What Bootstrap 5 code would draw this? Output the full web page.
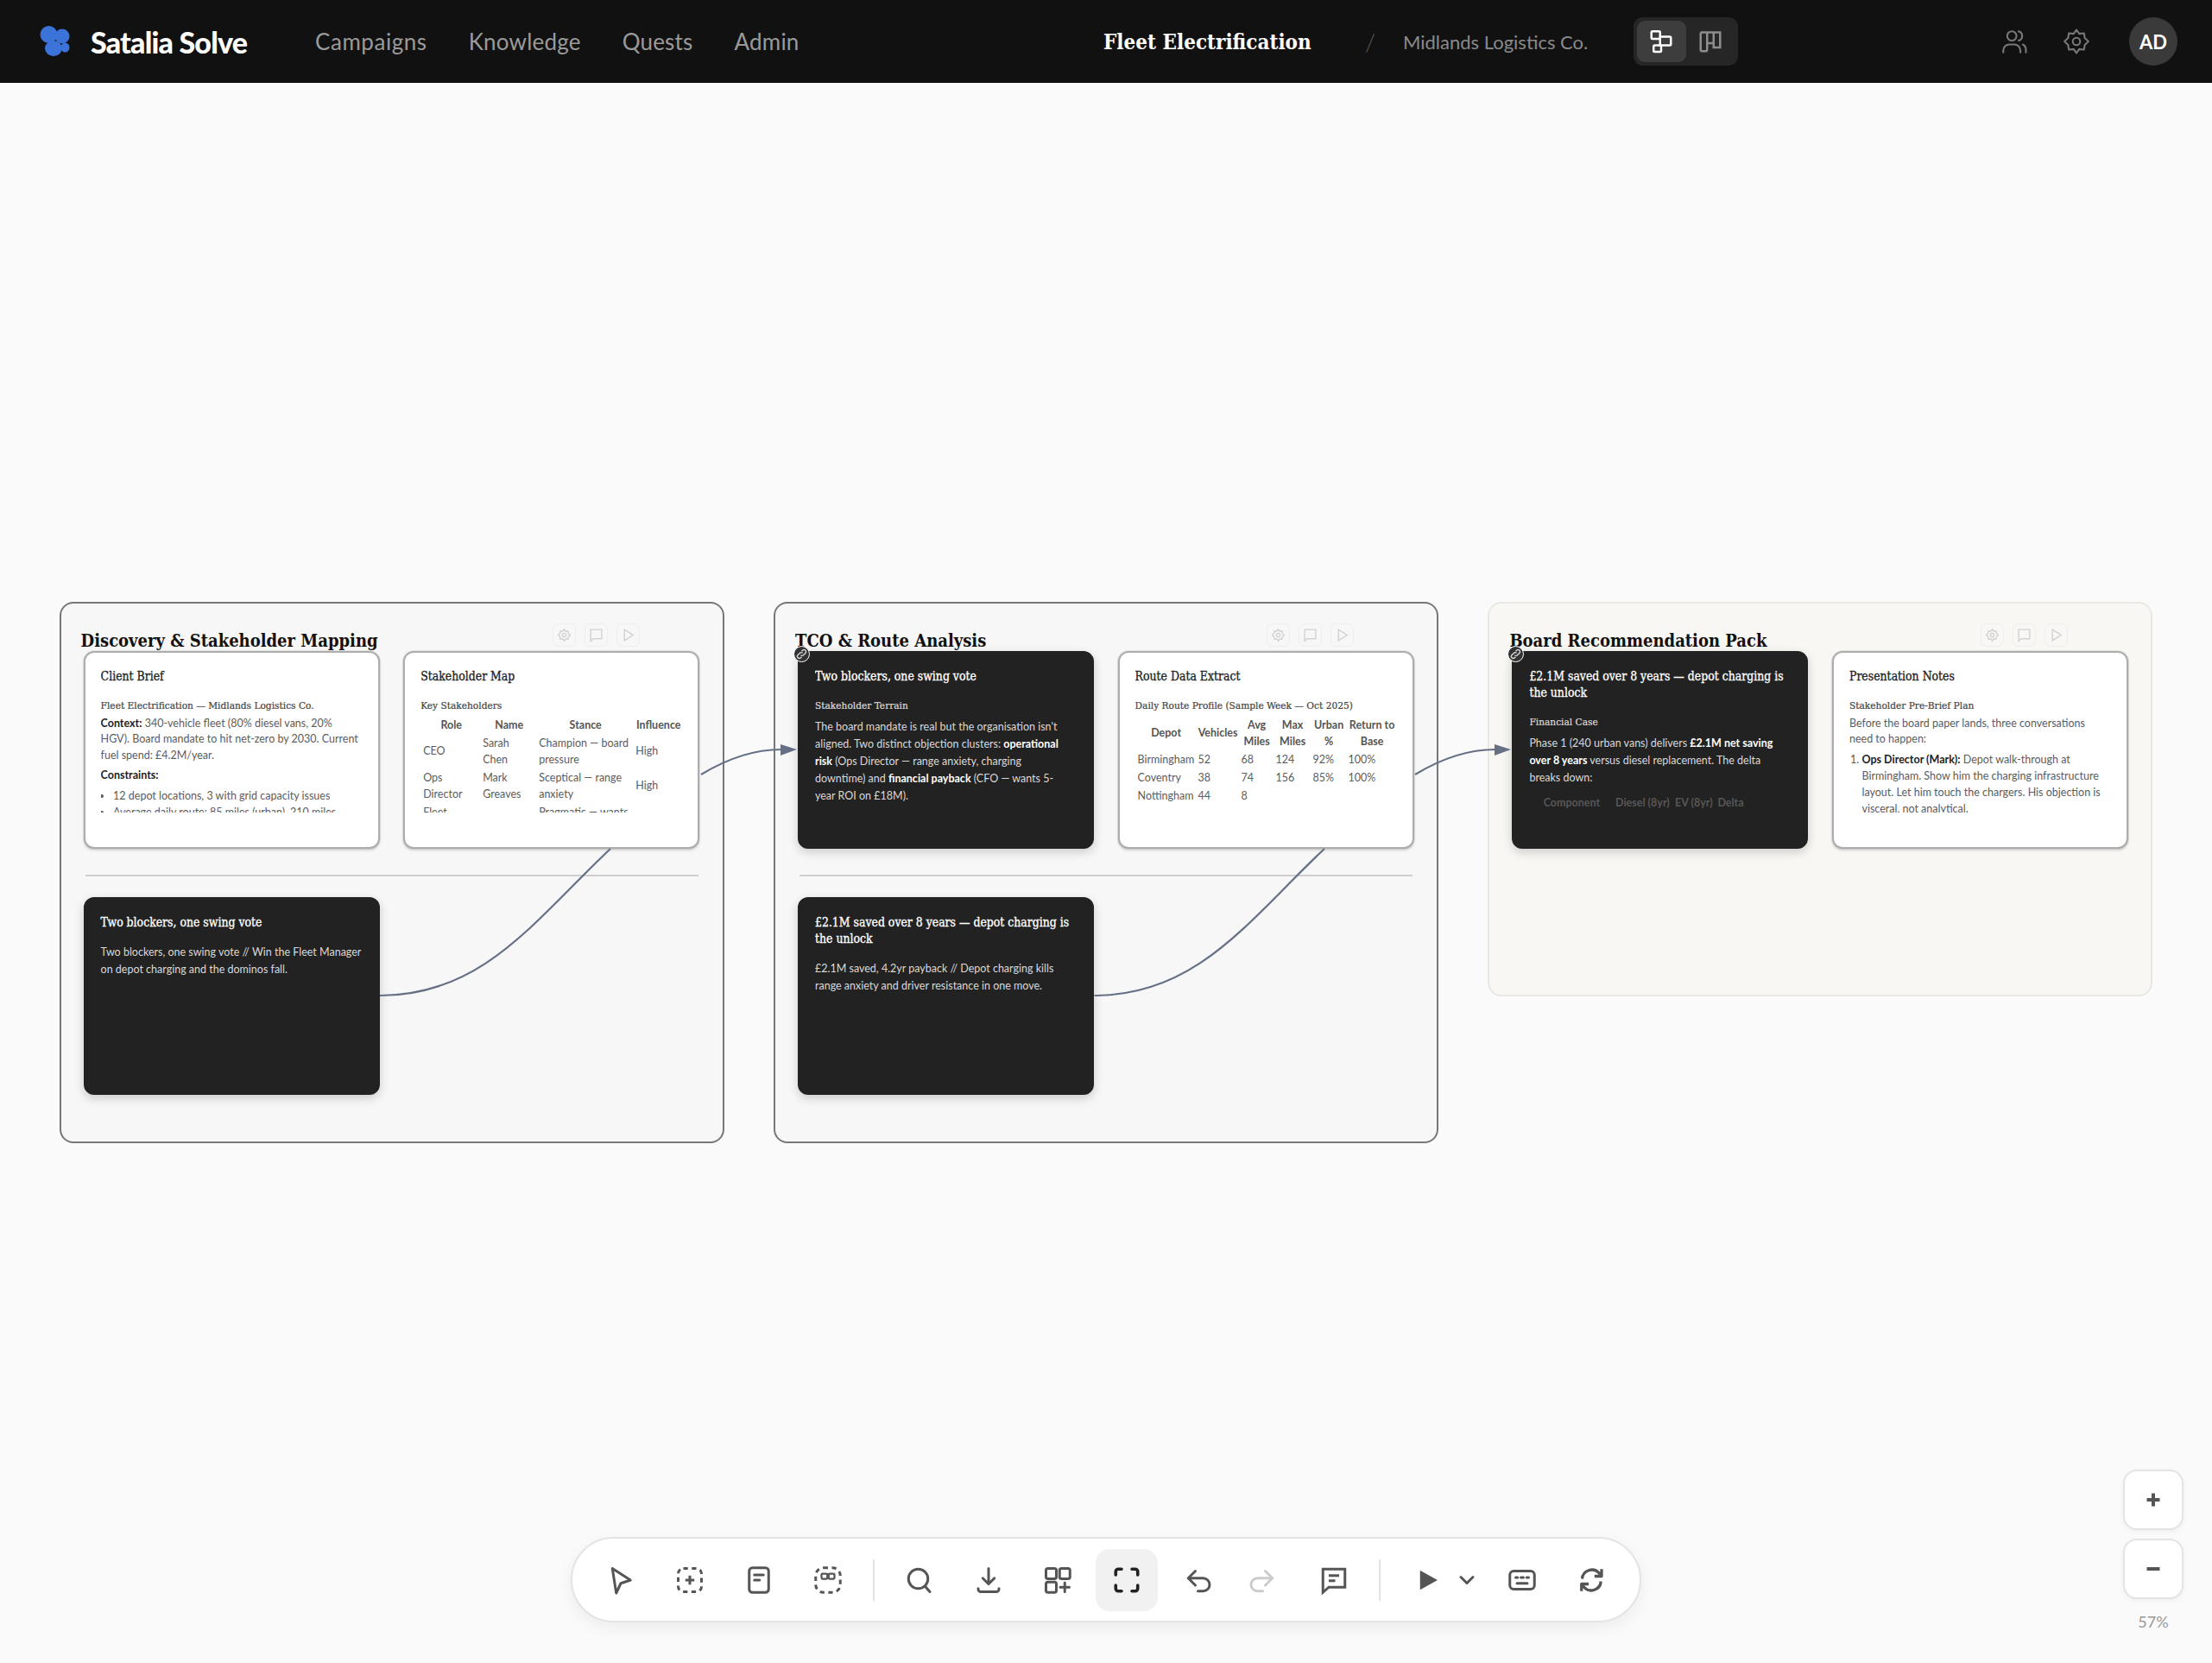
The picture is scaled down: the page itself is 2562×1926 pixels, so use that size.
<!DOCTYPE html>
<html lang="en">
<head>
  <meta charset="UTF-8" />
  <meta name="viewport" content="width=device-width, initial-scale=1.0"/>
  <title>Satalia Solve</title>
  <link href="https://cdn.jsdelivr.net/npm/bootstrap@5.3.6/dist/css/bootstrap.min.css" rel="stylesheet">
  <style>
    :root { --ui: Lato, "Liberation Sans", sans-serif; --slab: "DejaVu Serif Condensed", "DejaVu Serif", "Liberation Serif", serif; }
    body { background: #fafafa; font-family: var(--ui); overflow: hidden; }

    /* top bar */
    .topbar { height: 96px; background: #111112; padding-right: 40px; }
    .left-part { width: 1278px; padding-left: 46px; }
    .brand { font-family: var(--ui); font-weight: 900; font-size: 34px; letter-spacing: -.8px; color: #fff; margin-left: 24px; width: 260px; }
    .topbar .nav { gap: 48px; }
    .topbar .nav-link { padding: 0; font-size: 26px; color: #9a9a9a; letter-spacing: .2px; }
    .topbar .nav-link:first-child { letter-spacing: .55px; }
    .crumb { width: 614px; }
    .crumb-title { font-family: var(--slab); font-weight: 600; font-size: 24px; color: #fff; width: 303px; padding-top: 2px; }
    .crumb-slash { color: #555; font-size: 28px; width: 44px; font-weight: 300; }
    .crumb-sub { color: #8a8a8a; font-size: 22px; }
    .view-toggle { background: #262626; border-radius: 11px; padding: 4px; gap: 0; width: 121px; height: 56px; }
    .view-toggle .btn { width: 57px; height: 48px; padding: 0; border: 0; border-radius: 9px; color: #8d8d8d; }
    .view-toggle .btn.active { background: #3d3d3d; color: #fff; }
    .top-icon { width: 72px; color: #777; }
    .avatar { width: 56px; height: 56px; border-radius: 50%; background: #3a3a3a; color: #fff; font-weight: 700; font-size: 22px; margin-left: 25px; }

    /* canvas */
    .canvas { position: relative; height: 1830px; }
    .edges { position: absolute; left: 0; top: 0; z-index: 3; pointer-events: none; }
    .group { position: absolute; top: 601px; width: 770px; height: 627px; border: 2px solid #777; border-radius: 16px; background: #f7f7f7; padding: 0 26px; }
    .g1 { left: 68.6px; }
    .g2 { left: 896px; }
    .g3 { left: 1723.4px; height: 457px; background: #f8f7f3; border-color: #e8e8e5; }
    .group-head { height: 55px; }
    .group-title { font-family: var(--slab); font-weight: 700; font-size: 20px; line-height: 26px; color: #111; margin: 29.5px 0 0 -3px; white-space: nowrap; }
    .mini-tools { gap: 10px; margin: 23px 70px 0 0; }
    .mini-tools span { width: 27px; height: 27px; border: 1px solid #eee; border-radius: 7px; color: #d2d2d2; display: flex; align-items: center; justify-content: center; }
    .node-row { display: grid; grid-template-columns: 343px 343px; column-gap: 27.6px; }
    .group hr { margin: 30px 2px 24px; border: 0; border-top: 2px solid #cfcfd2; opacity: 1; }

    .node { position: relative; height: 229px; border: 2px solid #adadad; border-radius: 12px; background: #fff; padding: 17.5px 18px 0; box-shadow: 0 0 0 1px rgba(0,0,0,.07), 0 2px 3px rgba(0,0,0,.14); color: #5c5c5c; font-size: 12.5px; line-height: 18.8px; }
    .node.dark { background: #222; border-color: #222; color: #d9d9d9; line-height: 20px; box-shadow: 0 4px 12px rgba(0,0,0,.18); }
    .clip { height: 167px; overflow: hidden; }
    .node-title { font-family: var(--slab); font-weight: 400; -webkit-text-stroke: .3px currentColor; font-size: 13.9px; line-height: 19.5px; margin: 0 0 14.5px; color: #222; }
    .dark .node-title { color: #fff; }
    .node-sub { font-family: var(--slab); font-weight: 400; -webkit-text-stroke: .2px currentColor; font-size: 11.8px; line-height: 19px; margin: 0 0 2px; color: #444; }
    .dark .node-sub { color: #ddd; margin-bottom: 5px; }
    .node p { margin: 0 0 4.2px; }
    .dark p { padding-right: 4px; }
    .node b { color: #222; font-weight: 700; }
    .dark b { color: #fff; }
    .node ul, .node ol { margin: 0; padding-left: 14.5px; }
    .node table { table-layout: fixed; margin: 1.500px 0 0 1px; --bs-table-bg: transparent; --bs-table-color: currentColor; color: inherit; font-size: 12.5px; }
    .node table th, .node table td { padding: 1px 2px; vertical-align: middle; color: inherit; line-height: 19px; }
    .node table th { text-align: center; font-weight: 700; color: #555; }
    .stake { width: 303px; }
    .c1 { width: 69px; } .c2 { width: 65px; } .c3 { width: 112px; } .c4 { width: 57px; }
    .route { width: 303px; }
    .r1 { width: 70px; } .r2 { width: 50px; } .r3 { width: 40px; } .r4 { width: 43px; } .r5 { width: 41px; } .r6 { width: 59px; }
    .pack { width: 249px; margin-top: 8px !important; white-space: nowrap; }
    .pack th { color: #565656 !important; }
    .p1 { width: 96px; } .p2 { width: 68px; } .p3 { width: 51px; } .p4 { width: 34px; }
    .list-lead { margin-bottom: 5.2px !important; }
    .link-dot { position: absolute; left: -2px; top: -2px; width: 19px; height: 19px; border-radius: 50%; background: #333; border: 1.5px solid #fff; color: #ddd; display: flex; align-items: center; justify-content: center; transform: translate(-5px, -6px); z-index: 2; }

    /* bottom toolbar */
    .toolbar { position: absolute; left: 661px; top: 1684px; width: 1240px; height: 99px; border: 2px solid #e4e4e4; border-radius: 50px; background: #fff; padding-left: 19.6px; box-shadow: 0 6px 18px rgba(0,0,0,.06); gap: 8px; z-index: 4; }
    .tool { width: 72px; height: 72px; padding: 0; border: 0; border-radius: 16px; color: #555; display: flex; align-items: center; justify-content: center; flex: none; }
    .tool.active { background: #f1f1f1; color: #222; }
    .tool.off { color: #ccc; }
    .tool-sep { width: 2px; height: 48px; margin: 0 8px; background: #e3e3e3; flex: none; }
    .ms-undo { margin-left: 4px; }
    .ms-tight { margin-left: -8px; }
    .tool.play { width: 56px; margin-left: 10px; }
    .tool.chev { width: 36px; margin-left: -8px; }
    .ms-key { margin-left: 2px; }

    .zoom-box { position: absolute; left: 2459px; top: 1606px; width: 70px; z-index: 4; }
    .zoom-box .btn { width: 70px; height: 70px; padding: 0; background: #fff; border: 2px solid #e4e4e4; border-radius: 16px; color: #555; box-shadow: 0 2px 6px rgba(0,0,0,.05); display: flex; align-items: center; justify-content: center; margin-bottom: 10px; }
    .zoom-pct { font-size: 18px; color: #999; text-align: center; line-height: 22px; margin-top: 15px; }
  </style>
</head>
<body>
  <header class="topbar d-flex align-items-center">
    <div class="left-part d-flex align-items-center flex-shrink-0">
      <svg width="35" height="36" viewBox="0 0 35 36" fill="#3b73d9"><ellipse cx="10.5" cy="10" rx="10" ry="10"/><ellipse cx="26" cy="12" rx="8.5" ry="8.5"/><ellipse cx="16" cy="26" rx="10" ry="9"/><ellipse cx="29.5" cy="25" rx="5" ry="5.5"/></svg>
      <span class="brand">Satalia Solve</span>
      <nav class="nav">
        <a class="nav-link" href="#">Campaigns</a>
        <a class="nav-link" href="#">Knowledge</a>
        <a class="nav-link" href="#">Quests</a>
        <a class="nav-link" href="#">Admin</a>
      </nav>
    </div>
    <div class="crumb d-flex align-items-center flex-shrink-0">
      <span class="crumb-title">Fleet Electrification</span>
      <span class="crumb-slash">/</span>
      <span class="crumb-sub">Midlands Logistics Co.</span>
    </div>
    <div class="view-toggle d-flex">
      <button class="btn active"><svg width="30" height="30" viewBox="0 0 24 24" fill="none" stroke="currentColor" stroke-width="2"><rect x="3" y="2.500" width="8" height="7" rx="1"/><rect x="11" y="7.500" width="10" height="8" rx="1"/><rect x="5" y="15.500" width="7" height="6" rx="1"/></svg></button>
      <button class="btn"><svg width="30" height="30" viewBox="0 0 24 24" fill="none" stroke="currentColor" stroke-width="2"><path d="M3 3.500h18v14h-6v-14M9 3.500v10h6M3 3.500v16a1.500 1.500 0 0 0 1.500 1.500h3a1.500 1.500 0 0 0 1.500-1.500v-16"/></svg></button>
    </div>
    <div class="ms-auto d-flex align-items-center">
      <span class="top-icon d-flex justify-content-center"><svg width="34" height="34" viewBox="0 0 24 24" fill="none" stroke="currentColor" stroke-width="1.500" stroke-linecap="round"><circle cx="10" cy="7.500" r="3.800"/><path d="M3 21v-1.500a5 5 0 0 1 5-5h4a5 5 0 0 1 5 5v1.500M15.500 3.800a3.800 3.800 0 0 1 0 7.400M19 14.500a5 5 0 0 1 2.500 4.500v2"/></svg></span>
      <span class="top-icon d-flex justify-content-center"><svg width="34" height="34" viewBox="0 0 24 24" fill="none" stroke="currentColor" stroke-width="1.500" stroke-linejoin="round"><circle cx="12" cy="12" r="3"/><path d="M12 2.500l2.300 3.200 3.900-.4.600 3.900 3 2.800-3 2.800-.6 3.900-3.900-.4L12 21.500l-2.300-3.200-3.900.4-.6-3.900-3-2.800 3-2.800.6-3.900 3.900.4z"/></svg></span>
      <span class="avatar d-flex align-items-center justify-content-center">AD</span>
    </div>
  </header>

  <main class="canvas">
    <svg class="edges" width="2562" height="1830" viewBox="0 96 2562 1830" fill="none" stroke="#667085" stroke-width="2.200">
      <path d="M812 897C840 880 870 868 905 868"/>
      <polygon points="923,868 904,862 904,875" fill="#667085" stroke="none"/>
      <path d="M440 1153C560 1153 620 1065 707 983"/>
      <path d="M1639 897C1667 880 1697 868 1732 868"/>
      <polygon points="1750,868 1731,862 1731,875" fill="#667085" stroke="none"/>
      <path d="M1267.500 1153C1387 1153 1447 1065 1534 983"/>
    </svg>

    <section class="group g1">
      <div class="group-head d-flex justify-content-between">
        <h2 class="group-title">Discovery &amp; Stakeholder Mapping</h2>
        <div class="mini-tools d-flex">
          <span><svg width="17" height="17" viewBox="0 0 24 24" fill="none" stroke="currentColor" stroke-width="2"><circle cx="12" cy="12" r="3"/><path d="M12 2.500l2.300 3.200 3.900-.4.600 3.900 3 2.800-3 2.800-.6 3.900-3.900-.4L12 21.500l-2.300-3.200-3.900.4-.6-3.900-3-2.800 3-2.800.6-3.900 3.900.4z"/></svg></span>
          <span><svg width="17" height="17" viewBox="0 0 24 24" fill="none" stroke="currentColor" stroke-width="2"><path d="M3 3h18v15H7l-4 4z"/></svg></span>
          <span><svg width="17" height="17" viewBox="0 0 24 24" fill="none" stroke="currentColor" stroke-width="2"><path d="M6 3l14 9-14 9z"/></svg></span>
        </div>
      </div>
      <div class="node-row">
        <article class="node">
          <div class="clip">
            <h3 class="node-title">Client Brief</h3>
            <h4 class="node-sub">Fleet Electrification — Midlands Logistics Co.</h4>
            <p><b>Context:</b> 340-vehicle fleet (80% diesel vans, 20% HGV). Board mandate to hit net-zero by 2030. Current fuel spend: £4.2M/year.</p>
            <p class="list-lead"><b>Constraints:</b></p>
            <ul>
              <li>12 depot locations, 3 with grid capacity issues</li>
              <li>Average daily route: 85 miles (urban), 210 miles</li>
            </ul>
          </div>
        </article>
        <article class="node">
          <div class="clip">
            <h3 class="node-title">Stakeholder Map</h3>
            <h4 class="node-sub">Key Stakeholders</h4>
            <table class="table table-borderless stake">
              <thead><tr><th class="c1">Role</th><th class="c2">Name</th><th class="c3">Stance</th><th class="c4">Influence</th></tr></thead>
              <tbody>
                <tr><td>CEO</td><td>Sarah Chen</td><td>Champion — board pressure</td><td>High</td></tr>
                <tr><td>Ops Director</td><td>Mark Greaves</td><td>Sceptical — range anxiety</td><td>High</td></tr>
                <tr><td>Fleet Manager</td><td>Dani Rossi</td><td>Pragmatic — wants proof</td><td>High</td></tr>
              </tbody>
            </table>
          </div>
        </article>
      </div>
      <hr>
      <div class="node-row">
        <article class="node dark">
          <h3 class="node-title">Two blockers, one swing vote</h3>
          <div>Two blockers, one swing vote // Win the Fleet Manager on depot charging and the dominos fall.</div>
        </article>
      </div>
    </section>

    <section class="group g2">
      <div class="group-head d-flex justify-content-between">
        <h2 class="group-title">TCO &amp; Route Analysis</h2>
        <div class="mini-tools d-flex">
          <span><svg width="17" height="17" viewBox="0 0 24 24" fill="none" stroke="currentColor" stroke-width="2"><circle cx="12" cy="12" r="3"/><path d="M12 2.500l2.300 3.200 3.900-.4.600 3.900 3 2.800-3 2.800-.6 3.900-3.900-.4L12 21.500l-2.300-3.200-3.900.4-.6-3.900-3-2.800 3-2.800.6-3.900 3.900.4z"/></svg></span>
          <span><svg width="17" height="17" viewBox="0 0 24 24" fill="none" stroke="currentColor" stroke-width="2"><path d="M3 3h18v15H7l-4 4z"/></svg></span>
          <span><svg width="17" height="17" viewBox="0 0 24 24" fill="none" stroke="currentColor" stroke-width="2"><path d="M6 3l14 9-14 9z"/></svg></span>
        </div>
      </div>
      <div class="node-row">
        <article class="node dark">
          <span class="link-dot"><svg width="13" height="13" viewBox="0 0 24 24" fill="none" stroke="currentColor" stroke-width="2.500"><path d="M10 14a4 4 0 0 0 6 0l4-4a4 4 0 0 0-6-6l-2 2M14 10a4 4 0 0 0-6 0l-4 4a4 4 0 0 0 6 6l2-2"/></svg></span>
          <div class="clip">
            <h3 class="node-title">Two blockers, one swing vote</h3>
            <h4 class="node-sub">Stakeholder Terrain</h4>
            <p>The board mandate is real but the organisation isn't aligned. Two distinct objection clusters: <b>operational risk</b> (Ops Director — range anxiety, charging downtime) and <b>financial payback</b> (CFO — wants 5-year ROI on £18M).</p>
          </div>
        </article>
        <article class="node">
          <div class="clip">
            <h3 class="node-title">Route Data Extract</h3>
            <h4 class="node-sub">Daily Route Profile (Sample Week — Oct 2025)</h4>
            <table class="table table-borderless route">
              <thead><tr><th class="r1">Depot</th><th class="r2">Vehicles</th><th class="r3">Avg Miles</th><th class="r4">Max Miles</th><th class="r5">Urban %</th><th class="r6">Return to Base</th></tr></thead>
              <tbody>
                <tr><td>Birmingham</td><td>52</td><td>68</td><td>124</td><td>92%</td><td>100%</td></tr>
                <tr><td>Coventry</td><td>38</td><td>74</td><td>156</td><td>85%</td><td>100%</td></tr>
                <tr><td>Nottingham</td><td>44</td><td>8</td><td></td><td></td><td></td></tr>
              </tbody>
            </table>
          </div>
        </article>
      </div>
      <hr>
      <div class="node-row">
        <article class="node dark">
          <h3 class="node-title">£2.1M saved over 8 years — depot charging is the unlock</h3>
          <div>£2.1M saved, 4.2yr payback // Depot charging kills range anxiety and driver resistance in one move.</div>
        </article>
      </div>
    </section>

    <section class="group g3">
      <div class="group-head d-flex justify-content-between">
        <h2 class="group-title">Board Recommendation Pack</h2>
        <div class="mini-tools d-flex">
          <span><svg width="17" height="17" viewBox="0 0 24 24" fill="none" stroke="currentColor" stroke-width="2"><circle cx="12" cy="12" r="3"/><path d="M12 2.500l2.300 3.200 3.900-.4.600 3.900 3 2.800-3 2.800-.6 3.900-3.900-.4L12 21.500l-2.300-3.200-3.900.4-.6-3.900-3-2.800 3-2.800.6-3.900 3.900.4z"/></svg></span>
          <span><svg width="17" height="17" viewBox="0 0 24 24" fill="none" stroke="currentColor" stroke-width="2"><path d="M3 3h18v15H7l-4 4z"/></svg></span>
          <span><svg width="17" height="17" viewBox="0 0 24 24" fill="none" stroke="currentColor" stroke-width="2"><path d="M6 3l14 9-14 9z"/></svg></span>
        </div>
      </div>
      <div class="node-row">
        <article class="node dark">
          <span class="link-dot"><svg width="13" height="13" viewBox="0 0 24 24" fill="none" stroke="currentColor" stroke-width="2.500"><path d="M10 14a4 4 0 0 0 6 0l4-4a4 4 0 0 0-6-6l-2 2M14 10a4 4 0 0 0-6 0l-4 4a4 4 0 0 0 6 6l2-2"/></svg></span>
          <div class="clip">
            <h3 class="node-title">£2.1M saved over 8 years — depot charging is the unlock</h3>
            <h4 class="node-sub">Financial Case</h4>
            <p>Phase 1 (240 urban vans) delivers <b>£2.1M net saving over 8 years</b> versus diesel replacement. The delta breaks down:</p>
            <table class="table table-borderless pack">
              <thead><tr><th class="p1">Component</th><th class="p2">Diesel (8yr)</th><th class="p3">EV (8yr)</th><th class="p4">Delta</th></tr></thead>
            </table>
          </div>
        </article>
        <article class="node">
          <div class="clip">
            <h3 class="node-title">Presentation Notes</h3>
            <h4 class="node-sub">Stakeholder Pre-Brief Plan</h4>
            <p class="list-lead">Before the board paper lands, three conversations need to happen:</p>
            <ol>
              <li><b>Ops Director (Mark):</b> Depot walk-through at Birmingham. Show him the charging infrastructure layout. Let him touch the chargers. His objection is visceral, not analytical.</li>
            </ol>
          </div>
        </article>
      </div>
    </section>

    <div class="toolbar d-flex align-items-center">
      <button class="btn tool"><svg width="36" height="36" viewBox="0 0 24 24" fill="none" stroke="currentColor" stroke-width="2" stroke-linejoin="round"><path d="M5.500 3l14 9-7.500 2.500L8.500 22z"/></svg></button>
      <button class="btn tool"><svg width="36" height="36" viewBox="0 0 24 24" fill="none" stroke="currentColor" stroke-width="2" stroke-linecap="butt"><rect x="3" y="3" width="18" height="18" rx="4" stroke-dasharray="3.500 3"/><path d="M12 8.500v7M8.500 12h7"/></svg></button>
      <button class="btn tool"><svg width="36" height="36" viewBox="0 0 24 24" fill="none" stroke="currentColor" stroke-width="2" stroke-linecap="round"><rect x="4.500" y="2.500" width="15" height="19" rx="2.500"/><path d="M8.500 8h7M8.500 12h4"/></svg></button>
      <button class="btn tool"><svg width="36" height="36" viewBox="0 0 24 24" fill="none" stroke="currentColor" stroke-width="2" stroke-linecap="butt"><rect x="2.500" y="2.500" width="19" height="19" rx="6" stroke-dasharray="3.500 3"/><rect x="7" y="7" width="4.500" height="4" rx=".8" stroke-width="1.500"/><rect x="12.500" y="7" width="4.500" height="4" rx=".8" stroke-width="1.500"/></svg></button>
      <span class="tool-sep"></span>
      <button class="btn tool"><svg width="36" height="36" viewBox="0 0 24 24" fill="none" stroke="currentColor" stroke-width="2" stroke-linecap="round"><circle cx="11" cy="11" r="7.500"/><path d="M16.500 17l3.500 4"/></svg></button>
      <button class="btn tool"><svg width="36" height="36" viewBox="0 0 24 24" fill="none" stroke="currentColor" stroke-width="2" stroke-linecap="round" stroke-linejoin="round"><path d="M12 3v12M7.500 10.500L12 15l4.500-4.500M4 18.500v.5a2 2 0 0 0 2 2h12a2 2 0 0 0 2-2v-.5"/></svg></button>
      <button class="btn tool"><svg width="36" height="36" viewBox="0 0 24 24" fill="none" stroke="currentColor" stroke-width="2" stroke-linecap="round"><rect x="3" y="3" width="8" height="8" rx="1.500"/><rect x="13.500" y="3" width="8" height="8" rx="1.500"/><rect x="3" y="13.500" width="8" height="8" rx="1.500"/><path d="M17.500 14v7M14 17.500h7"/></svg></button>
      <button class="btn tool active"><svg width="36" height="36" viewBox="0 0 24 24" fill="none" stroke="currentColor" stroke-width="2.400" stroke-linecap="round"><path d="M3.500 8V5.500a2 2 0 0 1 2-2H8M16 3.500h2.500a2 2 0 0 1 2 2V8M20.500 16v2.500a2 2 0 0 1-2 2H16M8 20.500H5.500a2 2 0 0 1-2-2V16"/></svg></button>
      <button class="btn tool ms-undo"><svg width="36" height="36" viewBox="0 0 24 24" fill="none" stroke="currentColor" stroke-width="2" stroke-linecap="round" stroke-linejoin="round"><path d="M9 5L3.500 10.500 9 16M3.500 10.500H15a5 5 0 0 1 0 10h-4"/></svg></button>
      <button class="btn tool off ms-tight"><svg width="36" height="36" viewBox="0 0 24 24" fill="none" stroke="currentColor" stroke-width="2" stroke-linecap="round" stroke-linejoin="round"><path d="M15 5l5.500 5.500L15 16M20.500 10.500H9a5 5 0 0 0 0 10h4"/></svg></button>
      <button class="btn tool ms-undo"><svg width="36" height="36" viewBox="0 0 24 24" fill="none" stroke="currentColor" stroke-width="2"><path d="M3.500 3.500h17v14H8l-4.500 4z"/><path d="M8 8.500h8M8 12.500h5"/></svg></button>
      <span class="tool-sep"></span>
      <button class="btn tool play"><svg width="36" height="36" viewBox="0 0 24 24" fill="currentColor"><path d="M6.500 4.500L20 12 6.500 19.500z"/></svg></button>
      <button class="btn tool chev"><svg width="24" height="24" viewBox="0 0 24 24" fill="none" stroke="currentColor" stroke-width="3" stroke-linecap="round" stroke-linejoin="round"><path d="M5 8.500l7 7 7-7"/></svg></button>
      <button class="btn tool ms-key"><svg width="36" height="36" viewBox="0 0 24 24" fill="none" stroke="currentColor" stroke-width="2" stroke-linecap="round"><rect x="2.500" y="5" width="19" height="14" rx="3"/><path d="M7 10h1.500M11 10h2M15.500 10H17M8 14.500h8"/></svg></button>
      <button class="btn tool"><svg width="36" height="36" viewBox="0 0 24 24" fill="none" stroke="currentColor" stroke-width="2.200" stroke-linejoin="round"><path d="M5 11a7.500 7.500 0 0 1 13-4.500L20 9M20 3.500V9h-5.500M19.500 13a7.500 7.500 0 0 1-13 4.500L4.500 15M4.500 20.500V15H10"/></svg></button>
    </div>

    <div class="zoom-box">
      <button class="btn"><svg width="18" height="18" viewBox="0 0 18 18" fill="none" stroke="currentColor" stroke-width="4"><path d="M9 1.500v15M1.500 9h15"/></svg></button>
      <button class="btn"><svg width="18" height="18" viewBox="0 0 18 18" fill="none" stroke="currentColor" stroke-width="4"><path d="M1.500 9h15"/></svg></button>
      <div class="zoom-pct">57%</div>
    </div>
  </main>
</body>
</html>
